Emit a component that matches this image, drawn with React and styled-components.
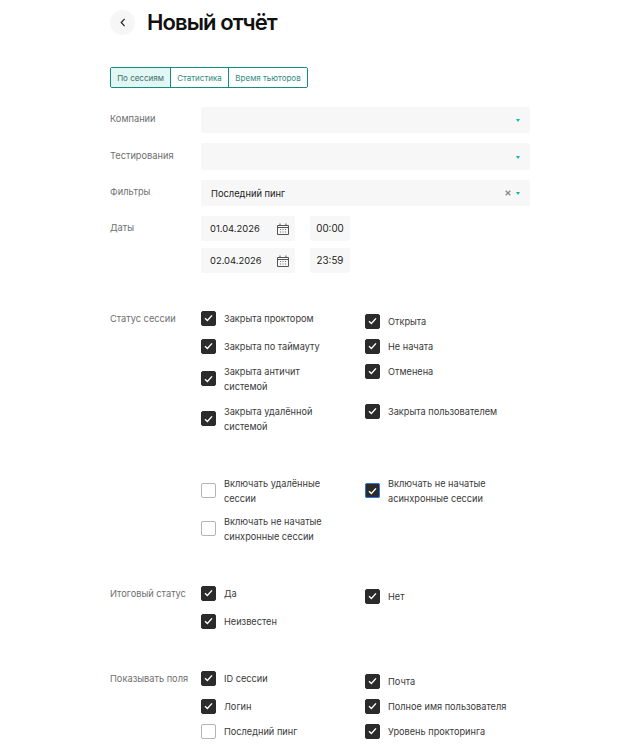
import React from 'react'
import styled, {createGlobalStyle} from 'styled-components'

const Global = createGlobalStyle`
  html, body {
    margin: 0;
    padding: 0;
    background: #fff;
    overflow: hidden;
  }
  body {
    font-family: Inter, "Noto Sans", sans-serif;
    color: #1d1d1b;
  }
`

const Page = styled.div`
  width: 644px;
  height: 744px;
  overflow: hidden;
  padding-left: 110px;
  box-sizing: border-box;
`

const Header = styled.header`
  display: flex;
  align-items: center;
  height: 45px;
  gap: 12px;
`

const BackButton = styled.button`
  width: 25px;
  height: 25px;
  border: 0;
  border-radius: 50%;
  background: #f6f6f6;
  padding: 0;
  display: flex;
  align-items: center;
  justify-content: center;
`

const Title = styled.h1`
  margin: 0 0 2px;
  font-size: 22px;
  line-height: 30px;
  font-weight: 600;
  letter-spacing: -0.9px;
  color: #111;
`

const Tabs = styled.div`
  display: inline-flex;
  margin-top: 22px;
  height: 21px;
  box-sizing: border-box;
  border: 1px solid #0e8f80;
  border-radius: 2px;
  overflow: hidden;
`

const Tab = styled.div`
  display: flex;
  align-items: center;
  justify-content: center;
  width: ${p => p.$width}px;
  font-size: 8px;
  color: ${p => p.$active ? '#3c6f69' : '#2f8a80'};
  background: ${p => p.$active ? '#e2f6f3' : '#fff'};
  & + & {
    border-left: 1px solid #0e8f80;
  }
`

const FormRows = styled.div`
  display: flex;
  flex-direction: column;
  gap: 10px;
  margin-top: 19px;
  width: 420px;
`

const Row = styled.div`
  display: flex;
`

const Label = styled.div`
  width: 91px;
  flex: none;
  font-size: 9.25px;
  line-height: 14px;
  padding-top: 5.2px;
  color: #6f6f6f;
`

const Select = styled.div`
  flex: 1;
  height: 26.4px;
  box-sizing: border-box;
  background: #f7f7f7;
  border-radius: 2px;
  display: flex;
  align-items: center;
  padding: 1px 10px 0;
  font-size: 9.3px;
  color: #1d1d1b;
`

const SelectValue = styled.span`
  flex: 1;
`

const Clear = styled.svg`
  width: 6px;
  height: 6px;
  margin-right: 5px;
`

const Caret = styled.span`
  width: 0;
  height: 0;
  border-left: 2px solid transparent;
  border-right: 2px solid transparent;
  border-top: 3px solid #14b8a0;
`

const DateGrid = styled.div`
  display: grid;
  grid-template-columns: 94px 40px;
  column-gap: 15px;
  row-gap: 7px;
`

const DateField = styled.div`
  height: 25px;
  background: #f7f7f7;
  border-radius: 2px;
  display: flex;
  align-items: center;
  justify-content: ${p => p.$center ? 'center' : 'space-between'};
  padding: ${p => p.$center ? '0' : '0 6px 0 9px'};
  font-size: ${p => p.$center ? 9.8 : 9.4}px;
  color: #1d1d1b;
`

const Section = styled.section`
  display: flex;
  margin-top: ${p => p.$top}px;
`

const SectionLabel = styled.div`
  width: 91px;
  flex: none;
  font-size: 9.25px;
  line-height: 14px;
  color: #6f6f6f;
  padding-top: 1px;
`

const Column = styled.div`
  width: 164px;
  flex: none;
  display: flex;
  flex-direction: column;
  padding-top: ${p => p.$top ?? 0}px;
`

const Item = styled.label`
  display: flex;
  align-items: center;
  gap: 8px;
  margin-top: ${p => p.$top ?? 0}px;
  font-size: 9.2px;
  line-height: 15px;
  color: #3a3a3a;
`

const Box = styled.span`
  width: 15px;
  height: 15px;
  flex: none;
  box-sizing: border-box;
  border-radius: 2px;
  display: flex;
  align-items: center;
  justify-content: center;
  background: ${p => p.$checked ? '#2b2b2b' : '#fff'};
  border: 1px solid ${p => p.$checked ? '#2b2b2b' : '#b4b4b4'};
  outline: ${p => p.$focus ? '1px solid #2f74ea' : 'none'};
  outline-offset: -1px;
`

const ItemText = styled.span`
  width: ${p => p.$width ?? 'auto'};
`

function Check({checked, focus, top, width, children}) {
  return (
    <Item $top={top}>
      <Box $checked={checked} $focus={focus}>
        {checked && (
          <svg width="9" height="8" viewBox="0 0 9 8">
            <path d="M1 4.2 3.4 6.5 8 1.4" fill="none" stroke="#fff" strokeWidth="1.4" />
          </svg>
        )}
      </Box>
      <ItemText $width={width}>{children}</ItemText>
    </Item>
  )
}

function CalendarIcon() {
  return (
    <svg width="12" height="12" viewBox="0 0 12 12">
      <path d="M.5 2.5h11v9H.5z M.5 4.500h11" fill="none" stroke="#555" strokeWidth="1" />
      <path d="M3 .5v2M9 .5v2" stroke="#555" strokeWidth="1" />
      <path d="M3 6h1v1H3zM5.5 6h1v1h-1zM8 6h1v1H8zM3 8.500h1v1H3zM5.5 8.500h1v1h-1zM8 8.500h1v1H8z" fill="#777" />
    </svg>
  )
}

function App() {
  return (
    <Page>
      <Global />
      <Header>
        <BackButton aria-label="Назад">
          <svg width="6" height="9" viewBox="0 0 6 9">
            <path d="M4.600 .8 1.200 4.500 4.600 8.200" fill="none" stroke="#222" strokeWidth="1.200" />
          </svg>
        </BackButton>
        <Title>Новый отчёт</Title>
      </Header>

      <Tabs>
        <Tab $active $width={59}>По сессиям</Tab>
        <Tab $width={57}>Статистика</Tab>
        <Tab $width={78}>Время тьюторов</Tab>
      </Tabs>

      <FormRows>
        <Row>
          <Label>Компании</Label>
          <Select><SelectValue /><Caret /></Select>
        </Row>
        <Row>
          <Label>Тестирования</Label>
          <Select><SelectValue /><Caret /></Select>
        </Row>
        <Row>
          <Label>Фильтры</Label>
          <Select>
            <SelectValue>Последний пинг</SelectValue>
            <Clear viewBox="0 0 7 7">
              <path d="M.8 .8 6.200 6.200M6.200 .8 .8 6.200" stroke="#8c8c8c" strokeWidth="1.600" />
            </Clear>
            <Caret />
          </Select>
        </Row>
        <Row>
          <Label>Даты</Label>
          <DateGrid>
            <DateField>01.04.2026<CalendarIcon /></DateField>
            <DateField $center>00:00</DateField>
            <DateField>02.04.2026<CalendarIcon /></DateField>
            <DateField $center>23:59</DateField>
          </DateGrid>
        </Row>
      </FormRows>

      <Section $top={37.8}>
        <SectionLabel>Статус сессии</SectionLabel>
        <Column>
          <Check checked>Закрыта проктором</Check>
          <Check checked top={13}>Закрыта по таймауту</Check>
          <Check checked top={9.8} width="90px">Закрыта античит системой</Check>
          <Check checked top={10} width="100px">Закрыта удалённой системой</Check>
        </Column>
        <Column $top={3}>
          <Check checked>Открыта</Check>
          <Check checked top={10}>Не начата</Check>
          <Check checked top={10}>Отменена</Check>
          <Check checked top={25}>Закрыта пользователем</Check>
        </Column>
      </Section>

      <Section $top={42.2}>
        <SectionLabel />
        <Column>
          <Check width="110px">Включать удалённые сессии</Check>
          <Check top={7.8} width="110px">Включать не начатые синхронные сессии</Check>
        </Column>
        <Column>
          <Check checked focus width="110px">Включать не начатые асинхронные сессии</Check>
        </Column>
      </Section>

      <Section $top={42.2}>
        <SectionLabel>Итоговый статус</SectionLabel>
        <Column>
          <Check checked>Да</Check>
          <Check checked top={13}>Неизвестен</Check>
        </Column>
        <Column $top={3}>
          <Check checked>Нет</Check>
        </Column>
      </Section>

      <Section $top={42}>
        <SectionLabel>Показывать поля</SectionLabel>
        <Column>
          <Check checked>ID сессии</Check>
          <Check checked top={13}>Логин</Check>
          <Check top={10}>Последний пинг</Check>
        </Column>
        <Column $top={3}>
          <Check checked>Почта</Check>
          <Check checked top={10}>Полное имя пользователя</Check>
          <Check checked top={10}>Уровень прокторинга</Check>
        </Column>
      </Section>
    </Page>
  )
}

export default App
